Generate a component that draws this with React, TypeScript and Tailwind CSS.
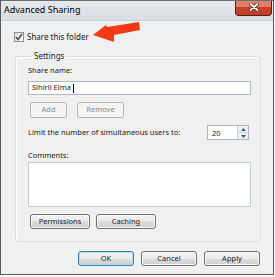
import { ReactNode } from "react"

const Btn = ({ children, w, disabled, primary }: { children: ReactNode; w: string; disabled?: boolean; primary?: boolean }) => {
  if (disabled) {
    return (
      <div className={`${w} h-[16px] flex items-center justify-center rounded-[2px] border border-[#b5b9bc] bg-[#f4f4f4] text-[#8a8a8a]`}>
        {children}
      </div>
    )
  }
  return (
    <div
      className={`${w} h-[15px] flex items-center justify-center rounded-[3px] border ${
        primary ? "border-[#3c7fb1] shadow-[inset_0_0_0_1px_#a8dcf3]" : "border-[#707070] shadow-[inset_0_0_0_1px_#fbfbfb]"
      } bg-[linear-gradient(#f2f2f2_0%,#ebebeb_50%,#dddddd_50%,#cfcfcf_100%)] text-[#1e1e1e]`}
    >
      {children}
    </div>
  )
}

export default function App() {
  return (
    <div className="w-[275px] h-[277px] bg-white" style={{ fontFamily: '"Noto Sans", "Open Sans", sans-serif' }}>
      <div className="relative w-[274px] h-[275px] bg-[#f0f0f0] border-l border-r border-b border-[#555b62] flex flex-col text-[7.5px] text-[#1a1a1a]">
        {/* title bar */}
        <div className="h-[21px] shrink-0 flex items-start bg-[linear-gradient(#e6e8eb,#dadee2)] border-b border-[#c9ced4] border-t border-t-[#6a6f75]">
          <span className="pl-[3px] pt-[3px] text-[9px] text-black leading-[12px]">Advanced Sharing</span>
          <div className="ml-auto mr-[1px] w-[37px] h-[15px] rounded-b-[4px] border border-t-0 border-[#4c2218] bg-red-700 flex flex-col overflow-hidden">
            <div className="h-[6px] bg-[#e08068]" />
            <div className="flex-1 bg-[#c5402a] flex items-start justify-center">
              <svg className="-mt-[4px]" width="10" height="8" viewBox="0 0 10 8">
                <path d="M1.5 1 L8.5 7 M8.5 1 L1.5 7" stroke="#3a1a14" strokeWidth="3.2" strokeLinecap="round" />
                <path d="M1.5 1 L8.5 7 M8.5 1 L1.5 7" stroke="#ffffff" strokeWidth="1.8" strokeLinecap="round" />
              </svg>
            </div>
          </div>
        </div>

        {/* share checkbox */}
        <div className="flex items-center gap-[3px] pl-[13px] mt-[10px] h-[11px]">
          <div className="w-[10px] h-[10px] border border-[#8e8f8f] bg-[linear-gradient(135deg,#dcdcdc,#ffffff)] flex items-center justify-center">
            <svg width="8" height="8" viewBox="0 0 8 8">
              <path d="M1 4 L3 6.5 L7 1" fill="none" stroke="#3b5068" strokeWidth="1.5" />
            </svg>
          </div>
          <span className="text-[8px]">Share this folder</span>
        </div>

        {/* arrow */}
        <svg className="absolute left-[88px] top-[18px]" width="54" height="28" viewBox="0 0 54 28">
          <path d="M4 17 L17 7 L18 9 L50 4 L51 12 L25 17 L25 24 Z" fill="#f43a14" />
        </svg>

        {/* settings group */}
        <fieldset className="mx-[14px] mt-[9px] w-[246px] h-[191px] border border-[#d5dfe5] rounded-[3px] pl-[12px] pr-[9px] shadow-[inset_1px_1px_0_#ffffff]">
          <legend className="ml-[4px] px-[2px] text-[8px] leading-[10px]">Settings</legend>
          <div className="mt-[4px] leading-[10px]">Share name:</div>
          <div className="mt-[6px] h-[14px] border border-[#abb9c7] bg-white flex items-center pl-[3px]">
            <span>Sihirli Elma</span>
            <span className="ml-[2px] w-px h-[9px] bg-black" />
          </div>
          <div className="mt-[7px] flex gap-[10px] pl-[2px]">
            <Btn w="w-[37px]" disabled>Add</Btn>
            <Btn w="w-[47px]" disabled>Remove</Btn>
          </div>
          <div className="mt-[7px] flex items-center h-[15px]">
            <span>Limit the number of simultaneous users to:</span>
            <div className="ml-auto mr-[2px] w-[42px] h-[15px] border border-[#abb9c7] bg-white flex">
              <span className="pl-[4px] pt-[2px] leading-[10px]">20</span>
              <div className="ml-auto w-[11px] flex flex-col border-l border-[#c8d2dc]">
                <div className="flex-1 flex items-center justify-center bg-[#eceef2] border-b border-[#c8d2dc]">
                  <svg width="5" height="3" viewBox="0 0 5 3"><path d="M0 3 L2.5 0 L5 3 Z" fill="#4a5d78" /></svg>
                </div>
                <div className="flex-1 flex items-center justify-center bg-[#eceef2]">
                  <svg width="5" height="3" viewBox="0 0 5 3"><path d="M0 0 L2.5 3 L5 0 Z" fill="#4a5d78" /></svg>
                </div>
              </div>
            </div>
          </div>
          <div className="mt-[10px] leading-[10px]">Comments:</div>
          <div className="mt-[2px] h-[45px] border border-[#c4ccd4] bg-white" />
          <div className="mt-[7px] flex gap-[6px] pl-[2px]">
            <Btn w="w-[60px]">Permissions</Btn>
            <Btn w="w-[60px]">Caching</Btn>
          </div>
        </fieldset>

        {/* bottom buttons */}
        <div className="mt-[9px] flex justify-end gap-[7px] pr-[13px]">
          <Btn w="w-[56px]" primary>OK</Btn>
          <Btn w="w-[56px]">Cancel</Btn>
          <Btn w="w-[56px]">Apply</Btn>
        </div>
      </div>
    </div>
  )
}
